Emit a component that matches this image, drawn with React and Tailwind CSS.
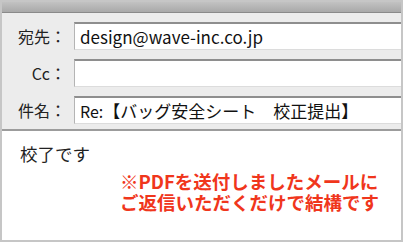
const jp = { fontFamily: '"Noto Sans CJK JP", "Noto Sans", sans-serif' };

function Field({ label, children }) {
  return (
    <div className="flex items-center h-[28px]">
      <div className="w-[64px] text-right text-[16px] text-[#222] leading-none">{label}</div>
      <div className="ml-[8px] flex-1 h-full bg-white border-t-2 border-l border-b border-t-[#8e8e8e] border-l-[#b4b4b4] border-b-[#dcdcdc] flex items-center pl-[5px] text-[17px] text-[#111] whitespace-nowrap overflow-hidden">
        {children}
      </div>
    </div>
  );
}

export default function App() {
  return (
    <div
      className="w-[403px] h-[242px] border-2 border-[#c6c6c6] bg-white overflow-hidden flex flex-col"
      style={jp}
    >
      <div className="h-[11px] shrink-0 bg-gradient-to-b from-[#c2c2c2] to-[#a9a9a9] border-b border-[#8a8a8a]" />
      <div className="bg-[#ececec] pt-[9px] pb-[5px] flex flex-col gap-[9px] shrink-0">
        <Field label="宛先：">design@wave-inc.co.jp</Field>
        <Field label="Cc：" />
        <Field label="件名：">
          <span className="text-[16px]">Re:</span>
          <span className="text-[17px]">【バッグ安全シート　校正提出】</span>
        </Field>
      </div>
      <div className="h-[2px] shrink-0 bg-[#9c9c9c]" />
      <div className="flex-1 pt-[12px] pl-[18px]">
        <div className="text-[17.5px] text-[#222] leading-[22px]">校了です</div>
        <div className="ml-[100px] mt-[6px] text-[18.5px] font-bold text-[#f0361c] leading-[21px] whitespace-nowrap">
          ※PDFを送付しましたメールに
          <br />
          ご返信いただくだけで結構です
        </div>
      </div>
    </div>
  );
}
